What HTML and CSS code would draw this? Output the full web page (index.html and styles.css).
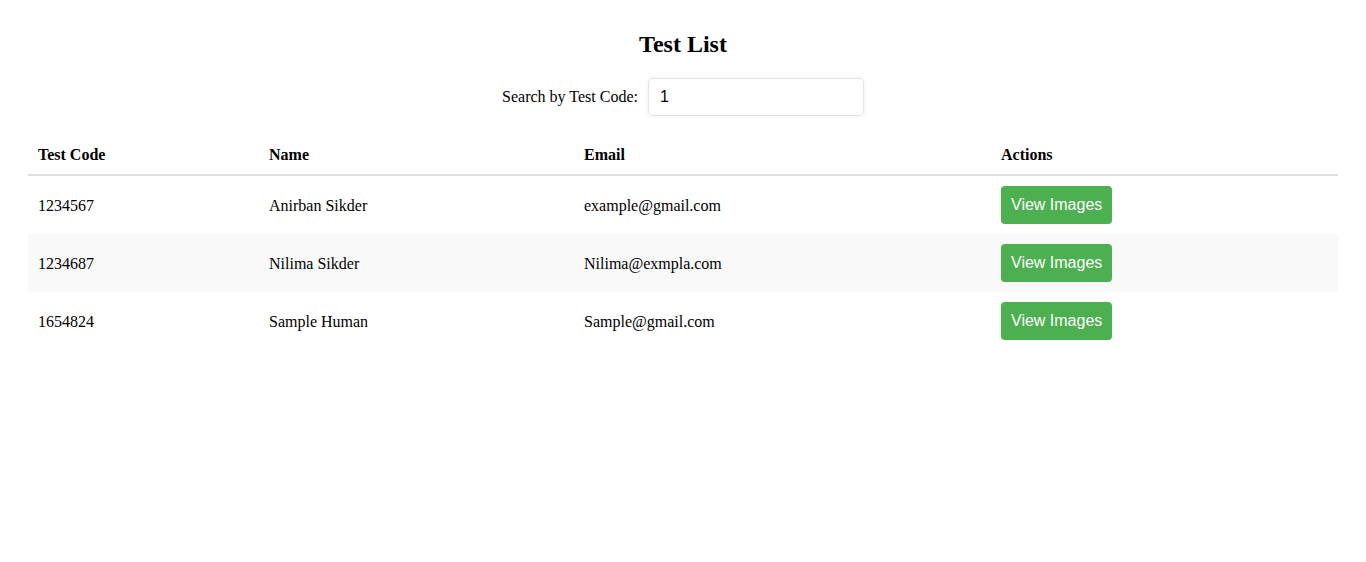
FILE: index.html
```html
<!DOCTYPE html>
<html>
<head>
<meta charset="utf-8">
<title>Test List</title>
<link rel="stylesheet" href="styles.css">
</head>
<body>
<div class="page">
  <h2 class="title">Test List</h2>
  <div class="search">
    <label class="search-label" for="code">Search by Test Code:</label>
    <input class="search-input" id="code" type="text" value="1">
  </div>
  <table class="list">
    <colgroup>
      <col class="c1"><col class="c2"><col class="c3"><col class="c4">
    </colgroup>
    <thead>
      <tr><th>Test Code</th><th>Name</th><th>Email</th><th>Actions</th></tr>
    </thead>
    <tbody>
      <tr><td>1234567</td><td>Anirban Sikder</td><td>example@gmail.com</td><td><button class="btn">View Images</button></td></tr>
      <tr><td>1234687</td><td>Nilima Sikder</td><td>Nilima@exmpla.com</td><td><button class="btn">View Images</button></td></tr>
      <tr><td>1654824</td><td>Sample Human</td><td>Sample@gmail.com</td><td><button class="btn">View Images</button></td></tr>
    </tbody>
  </table>
</div>
</body>
</html>
```
FILE: styles.css
```css
html, body {
  margin: 0;
  padding: 0;
  background: #fff;
}
body {
  font-family: "Liberation Serif", "Times New Roman", serif;
  font-size: 16px;
  color: #000;
}
.page {
  padding: 30px 28px 20px;
}
.title {
  margin: 0 0 20px;
  font-size: 24px;
  font-weight: bold;
  text-align: center;
  line-height: 28px;
}
.search {
  display: flex;
  justify-content: center;
  align-items: center;
  margin-bottom: 20px;
}
.search-label {
  margin-right: 10px;
}
.search-input {
  box-sizing: border-box;
  width: 216px;
  height: 38px;
  padding: 0 11px;
  font-family: "Liberation Sans", Arial, sans-serif;
  font-size: 16px;
  color: #000;
  border: 1px solid #e4e4e4;
  border-radius: 5px;
  box-shadow: 0 0 4px rgba(0,0,0,0.08);
  outline: none;
}
.list {
  width: 100%;
  table-layout: fixed;
  border-collapse: collapse;
}
.c1 { width: 231px; }
.c2 { width: 315px; }
.c3 { width: 417px; }
.c4 { width: 347px; }
.list th {
  text-align: left;
  padding: 10px;
  font-weight: bold;
  border-bottom: 2px solid #ddd;
  line-height: 18px;
}
.list td {
  padding: 10px;
  line-height: 19px;
  vertical-align: middle;
}
.list tbody tr:nth-child(even) {
  background: #f9f9f9;
}
.btn {
  display: block;
  box-sizing: border-box;
  height: 38px;
  padding: 0 10px;
  background: #4caf50;
  color: #fff;
  border: none;
  border-radius: 4px;
  font-family: "Liberation Sans", Arial, sans-serif;
  font-size: 16px;
  cursor: pointer;
}
```
